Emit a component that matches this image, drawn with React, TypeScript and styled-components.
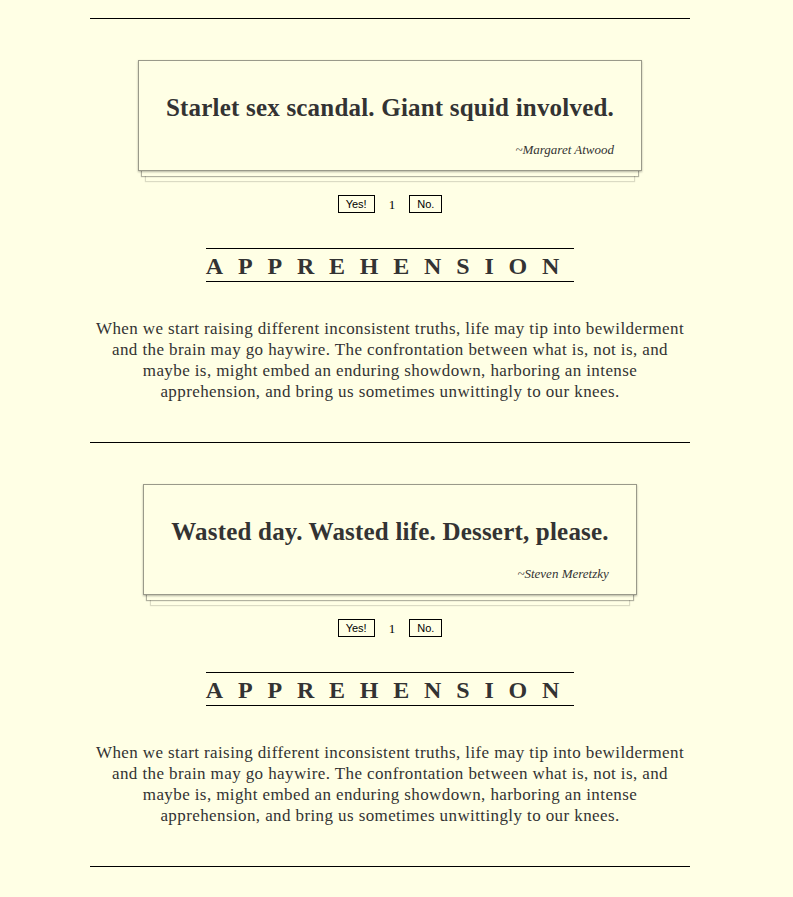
import styled, { createGlobalStyle } from "styled-components";

const GlobalStyle = createGlobalStyle`
  body {
    margin: 0;
    background-color: #ffffe5;
    color: #333;
    font-family: "Liberation Serif", "DejaVu Serif", serif;
  }
`;

const Page = styled.div`
  display: flex;
  justify-content: center;
  padding: 18px 13px 30px 0;
`;

const Column = styled.div`
  width: 600px;
`;

const Rule = styled.hr`
  margin: 0;
  border: none;
  border-top: 1px solid #000;
`;

const Entry = styled.section`
  display: flex;
  flex-direction: column;
  align-items: center;
  padding: 41px 0 40px;
`;

// stacked-paper look: two thinner sheets peeking out below the card
const Card = styled.div`
  display: inline-block;
  background-color: #ffffe5;
  border: 1px solid #9a9a8a;
  padding: 30px 27px 12px;
  box-shadow:
    0 1px 2px rgba(0, 0, 0, 0.3),
    0 9px 0 -4px #ffffe5,
    0 9px 1px -3px rgba(0, 0, 0, 0.3),
    0 18px 0 -8px #ffffe5,
    0 18px 1px -7px rgba(0, 0, 0, 0.14);
`;

const Quote = styled.h2`
  margin: 0;
  font-size: 25px;
  font-weight: 700;
  line-height: 34px;
  letter-spacing: 0.2px;
`;

const Author = styled.p`
  margin: 17px 0 0;
  text-align: right;
  font-size: 13px;
  font-style: italic;
`;

const Votes = styled.div`
  display: flex;
  align-items: center;
  gap: 14px;
  margin-top: 23px;
`;

const VoteButton = styled.button`
  background: transparent;
  border: 1px solid #000;
  border-radius: 0;
  padding: 2px 7px 1px;
  font-family: "Liberation Sans", Arial, sans-serif;
  font-size: 11px;
  color: #000;
  line-height: 13px;
`;

const Count = styled.span`
  font-family: "Liberation Serif", serif;
  font-size: 13px;
  color: #000;
  padding-top: 3px;
`;

const Heading = styled.h3`
  margin: 35px 0 0;
  padding: 5px 0 2px 0;
  border-top: 1px solid #000;
  border-bottom: 1px solid #000;
  font-size: 24px;
  font-weight: 700;
  letter-spacing: 14.8px;
  line-height: 25px;
  text-transform: uppercase;
`;

const Body = styled.p`
  margin: 36px 0 0;
  padding: 0 4px;
  text-align: center;
  font-size: 17px;
  line-height: 21px;
  letter-spacing: 0.4px;
`;

const entries = [
  { quote: "Starlet sex scandal. Giant squid involved.", author: "Margaret Atwood" },
  { quote: "Wasted day. Wasted life. Dessert, please.", author: "Steven Meretzky" },
];

const text =
  "When we start raising different inconsistent truths, life may tip into bewilderment and the brain may go haywire. The confrontation between what is, not is, and maybe is, might embed an enduring showdown, harboring an intense apprehension, and bring us sometimes unwittingly to our knees.";

export default function App() {
  return (
    <>
      <GlobalStyle />
      <Page>
        <Column>
          <Rule />
          {entries.map((e) => (
            <div key={e.author}>
              <Entry>
                <Card>
                  <Quote>{e.quote}</Quote>
                  <Author>~{e.author}</Author>
                </Card>
                <Votes>
                  <VoteButton>Yes!</VoteButton>
                  <Count>1</Count>
                  <VoteButton>No.</VoteButton>
                </Votes>
                <Heading>Apprehension</Heading>
                <Body>{text}</Body>
              </Entry>
              <Rule />
            </div>
          ))}
        </Column>
      </Page>
    </>
  );
}
